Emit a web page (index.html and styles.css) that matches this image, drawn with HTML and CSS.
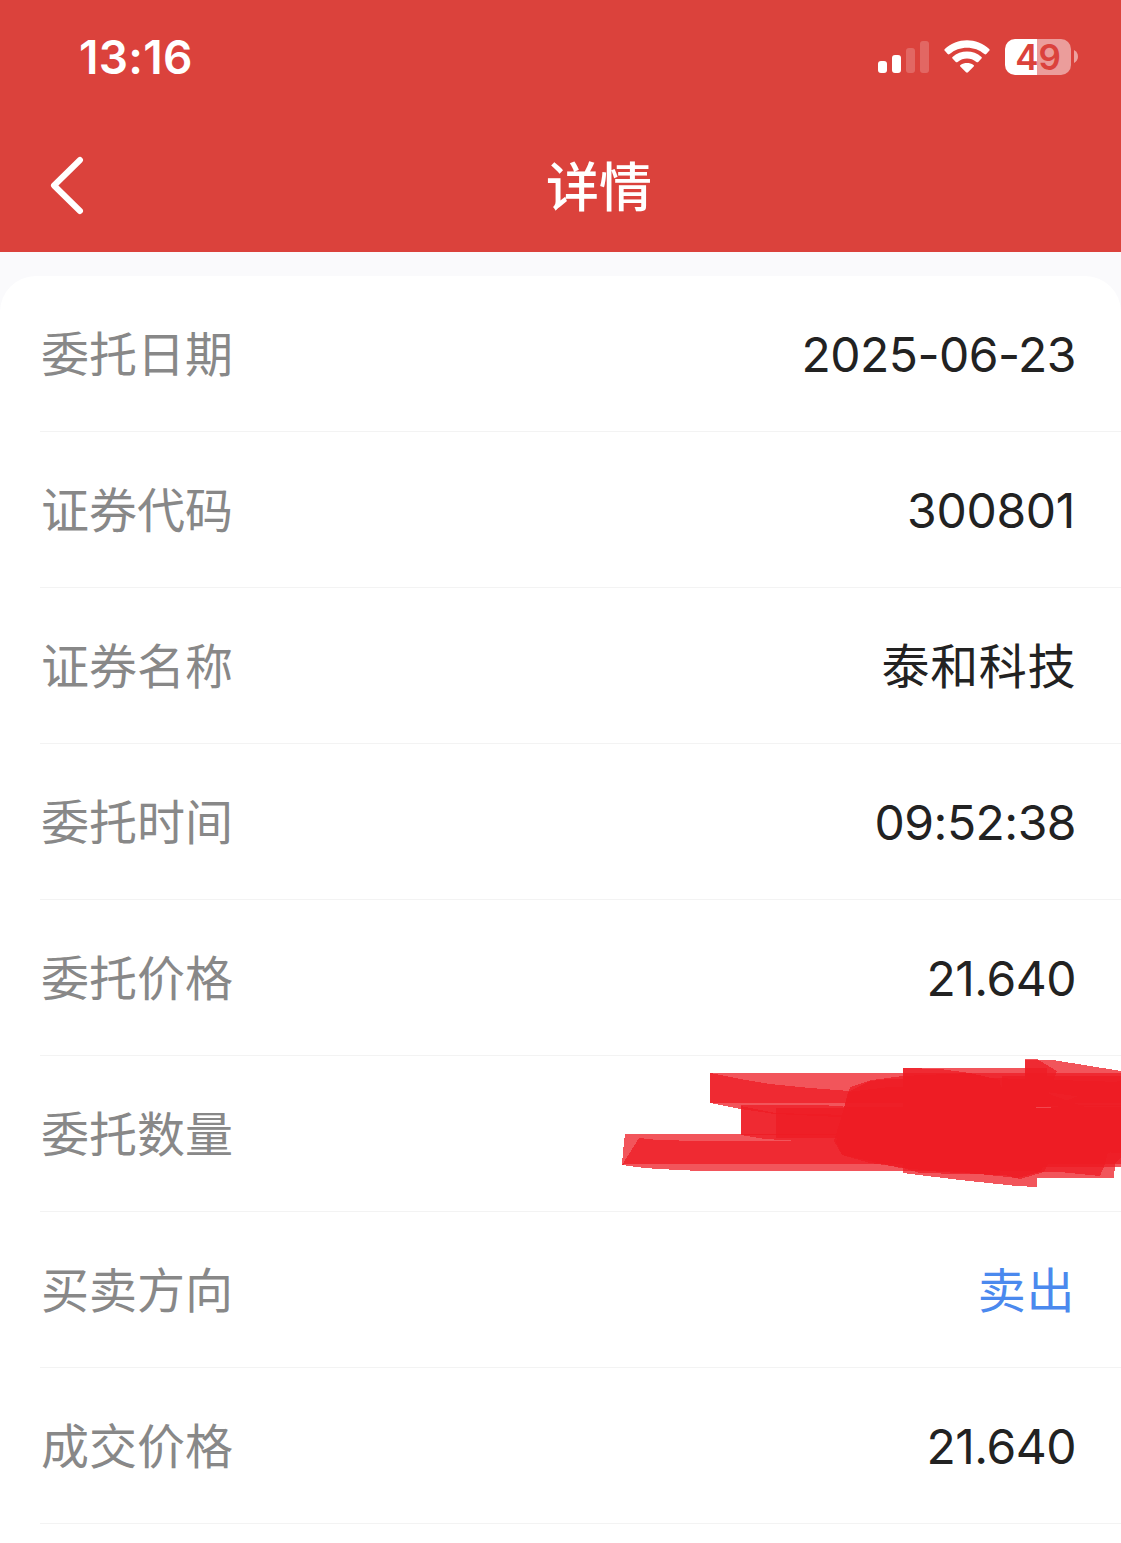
FILE: index.html
```html
<!DOCTYPE html>
<html lang="zh-CN">
<head>
    <meta charset="UTF-8">
    <meta name="viewport" content="width=device-width, initial-scale=1.0">
    <title>详情</title>
    <link rel="stylesheet" href="styles.css">
</head>
<body>
    <header class="header">
        <div class="status-bar">
            <div class="clock">13:16</div>
            <div class="status-icons">
                <svg class="signal" width="52" height="34" viewBox="0 0 52 34" fill="#fff">
                    <rect x="0" y="21" width="9" height="12" rx="3"/>
                    <rect x="14" y="15" width="9" height="18" rx="3"/>
                    <rect x="28" y="8" width="9" height="25" rx="3" opacity="0.2"/>
                    <rect x="42" y="1" width="9" height="32" rx="3" opacity="0.2"/>
                </svg>
                <svg class="wifi" width="46" height="34" viewBox="0 0 46 34" fill="#fff">
                    <path d="M.8 10.8Q-.1 9.9.8 9C13-2.7 33-2.7 45.2 9q.9.9 0 1.800l-2.900 3.200q-.9.900-1.900 0C31 5.500 15 5.500 5.600 14q-1 .9-1.900 0z"/>
                    <path d="M8.500 18.600q-.8-.8 0-1.700c8.200-7.300 20.800-7.300 29 0q.8.900 0 1.700l-3.300 3.300q-.9.800-1.800 0c-5.600-4.500-13.200-4.500-18.800 0q-.9.800-1.800 0z"/>
                    <path d="M16.300 26.500q-.9-.9.200-1.600c4-2.600 9-2.600 13 0q1.100.7.200 1.600l-5.700 5.800q-1 .9-2 0z"/>
                </svg>
                <div class="battery">
                    <div class="battery-body">49</div>
                    <svg class="battery-cap" width="5" height="14" viewBox="0 0 5 14">
                        <path d="M0 0C5.300 2.500 5.300 10.500 0 13z" fill="#fff" opacity="0.5"/>
                    </svg>
                </div>
            </div>
        </div>
        <div class="nav-bar">
            <svg class="back" width="36" height="60" viewBox="0 0 36 60">
                <path d="M31 4L5 29.500L31 55" fill="none" stroke="#fff" stroke-width="6" stroke-linecap="round" stroke-linejoin="round"/>
            </svg>
            <h1>详情</h1>
        </div>
    </header>

    <main class="card">
        <div class="row"><span class="label">委托日期</span><span class="value">2025-06-23</span></div>
        <div class="row"><span class="label">证券代码</span><span class="value code">300801</span></div>
        <div class="row"><span class="label">证券名称</span><span class="value name">泰和科技</span></div>
        <div class="row"><span class="label">委托时间</span><span class="value">09:52:38</span></div>
        <div class="row"><span class="label">委托价格</span><span class="value">21.640</span></div>
        <div class="row">
            <span class="label">委托数量</span>
            <!-- marcador rojo sobre la cantidad -->
            <svg class="marker" width="500" height="130" viewBox="621 1058 500 130" shape-rendering="crispEdges">
                <path d="M710 1073H1121V1103H710z"/>
                <path d="M710 1073L740 1079L770 1084L810 1088L850 1091L870 1081L889 1079L960 1077L1121 1082V1118H860L775 1114L740 1109L710 1103z"/>
                <path d="M741 1105H822L850 1107H1121V1141H800L765 1139L741 1135z"/>
                <path d="M741 1106L775 1113L850 1115H1121V1135H741z"/>
                <path d="M776 1108H1121V1138H776z"/>
                <path d="M625 1134H1121V1164H625L622 1165L623 1151z"/>
                <path d="M639 1138L658 1140L700 1141H903L1110 1145L1105 1164L1100 1176L1060 1172H1040L1030 1171H700L658 1169L645 1168L622 1165L629 1154z"/>
                <path d="M850 1087L872 1080L903 1076L970 1073L1000 1080V1175L940 1172L905 1168L870 1163L842 1155L836 1142L844 1108z"/>
                <path d="M848 1092L889 1087H1030L1121 1120V1152L1052 1155L1040 1172L1017 1178L960 1172L900 1168L870 1161L842 1155L834 1141L844 1108z"/>
                <path d="M903 1068H1047V1140L1121 1150V1167H1037V1187L1017 1186L960 1180L903 1173z"/>
                <path d="M903 1068L940 1069L970 1073L1000 1080L1002 1098L1045 1112L1095 1119V1148L1052 1155L1044 1172L1020 1179L1005 1175L920 1173L903 1168z"/>
                <path d="M1025 1059H1037L1057 1071L1047 1098L1025 1089z"/>
                <path d="M1025 1060L1053 1060L1121 1071V1101L1075 1096L1025 1089z"/>
                <path d="M1002 1076H1121V1106H1002z"/>
                <path d="M1002 1100L1065 1101L1121 1080V1110L1094 1120L1121 1124V1157L1115 1164L1114 1178H1037V1168L1002 1160z"/>
                <path d="M1058 1105L1121 1105V1153L1060 1150z"/>
                <path class="gap" d="M1036 1107H1051V1108H1036z"/>
            </svg>
        </div>
        <div class="row"><span class="label">买卖方向</span><span class="value sell">卖出</span></div>
        <div class="row"><span class="label">成交价格</span><span class="value">21.640</span></div>
    </main>
</body>
</html>
```

FILE: styles.css
```css
* {
    box-sizing: border-box;
}

body {
    margin: 0;
    height: 1543px;
    overflow: hidden;
    background-color: #fafafc;
    font-family: 'Inter', 'Noto Sans CJK SC', sans-serif;
    color: #222;
}

.header {
    height: 252px;
    background-color: #db423c;
    color: #fff;
}

.status-bar {
    display: flex;
    justify-content: space-between;
    align-items: center;
    height: 114px;
    padding: 0 42px 0 79px;
}

.clock {
    font-size: 46px;
    font-weight: 600;
    letter-spacing: 0.3px;
}

.status-icons {
    display: flex;
    align-items: center;
}

.wifi {
    margin-left: 14px;
}

.battery {
    display: flex;
    align-items: center;
    margin-left: 15px;
}

.battery-body {
    width: 66px;
    height: 36px;
    border-radius: 10px;
    background: linear-gradient(to right, #fff 32px, #eb9d9b 32px);
    color: #db423c;
    font-size: 35px;
    font-weight: 600;
    line-height: 36px;
    text-align: center;
}

.battery-cap {
    margin-left: 3px;
}

.nav-bar {
    display: flex;
    align-items: center;
    height: 138px;
    padding: 6px 49px 0;
}

.back {
    margin-bottom: 1px;
}

h1 {
    flex: 1;
    margin: 0;
    padding: 3px 0 0 41px;
    font-size: 53px;
    font-weight: 500;
    line-height: 80px;
    text-align: center;
}

.card {
    margin-top: 24px;
    height: 1300px;
    padding-left: 40px;
    background-color: #fff;
    border-radius: 36px 36px 0 0;
}

.row {
    position: relative;
    display: flex;
    justify-content: space-between;
    align-items: center;
    height: 156px;
    padding: 0 45px 0 1px;
    border-bottom: 1px solid #f3f3f3;
}

.label {
    padding-bottom: 5px;
    font-size: 48px;
    color: #888;
}

.value {
    padding-top: 1px;
    font-size: 48px;
    letter-spacing: -0.5px;
}

.code {
    padding-right: 1px;
    letter-spacing: -0.3px;
}

.name {
    padding: 0 0 5px;
    letter-spacing: 0.6px;
}

.sell {
    padding: 0 1px 5px 0;
    letter-spacing: 0.6px;
    color: #4b89ee;
}

/* Trazos semitransparentes que se superponen */
.marker {
    position: absolute;
    top: 2px;
    right: 0;
    fill: #ed1c24;
    fill-opacity: 0.75;
}

.marker .gap {
    fill: #f4565d;
}
```
